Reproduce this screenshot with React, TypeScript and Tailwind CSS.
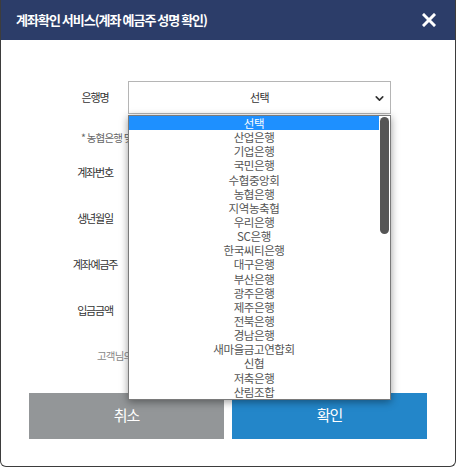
import { ChevronDown } from 'lucide-react';

const banks = [
    '선택',
    '산업은행',
    '기업은행',
    '국민은행',
    '수협중앙회',
    '농협은행',
    '지역농축협',
    '우리은행',
    'SC은행',
    '한국씨티은행',
    '대구은행',
    '부산은행',
    '광주은행',
    '제주은행',
    '전북은행',
    '경남은행',
    '새마을금고연합회',
    '신협',
    '저축은행',
    '산림조합',
];

const fields = ['계좌번호', '생년월일', '계좌예금주', '입금금액'];

const labelClass = 'w-[100px] pl-[34px] text-center text-[11px] tracking-[-1.2px] text-[#333]';
const itemClass = 'h-[14.15px] leading-[14.15px] text-center text-[11.5px] tracking-[-0.4px]';

export default function App() {
    return (
        <div className="w-[456px] h-[467px] bg-white font-['Noto_Sans_CJK_KR','Noto_Sans',sans-serif]">
            <div className="flex flex-col h-full border-x border-b border-[#3d3d3d] rounded-b-[6px] overflow-hidden">
                <div className="h-[40px] shrink-0 bg-[#2c3d69] flex items-center justify-between pl-[15px] pr-[19px]">
                    <h1 className="text-[13px] font-bold tracking-[-1px] text-white">
                        계좌확인 서비스(계좌 예금주 성명 확인)
                    </h1>
                    <svg width="14" height="14" viewBox="0 0 14 14" className="text-white">
                        <path d="M2 2 L12 12 M12 2 L2 12" stroke="currentColor" strokeWidth="3" strokeLinecap="square" />
                    </svg>
                </div>

                <div className="flex-1 px-[27px] pt-[41px]">
                    <div className="flex items-center pr-[37px]">
                        <span className={labelClass}>은행명</span>
                        <div className="relative flex-1">
                            <div className="h-[33px] border border-[#b5b5b5] bg-white flex items-center justify-center relative">
                                <span className="text-[11px] tracking-[-0.5px] text-[#333]">선택</span>
                                <ChevronDown className="absolute right-[4px] top-[10px] w-[13px] h-[13px] text-[#333]" strokeWidth={3} />
                            </div>

                            {/* open native-style option list */}
                            <div className="absolute left-0 right-0 top-[34px] z-10 border border-[#7a7a7a] bg-white shadow-[0_2px_8px_rgba(0,0,0,0.4)] flex">
                                <ul className="flex-1">
                                    {banks.map((b, i) => (
                                        <li
                                            key={b}
                                            className={i === 0 ? `${itemClass} bg-[#1e90ff] text-white` : `${itemClass} text-[#555]`}
                                        >
                                            {b}
                                        </li>
                                    ))}
                                </ul>
                                <div className="w-[11px] pt-[1px] pl-[1px]">
                                    <div className="w-[9px] h-[117px] rounded-full bg-[#555]" />
                                </div>
                            </div>
                        </div>
                    </div>

                    <p className="mt-[16px] pl-[53px] text-[10.5px] tracking-[-0.8px] text-[#666]">
                        * 농협은행 및 지역농축협은 구분하여 선택해 주세요.
                    </p>

                    <div className="mt-[9px] flex flex-col gap-[11px] pr-[37px]">
                        {fields.map((f) => (
                            <div key={f} className="flex items-center">
                                <span className={labelClass}>{f}</span>
                                <div className="flex-1 h-[35px] border border-[#c8c8c8]" />
                            </div>
                        ))}
                    </div>

                    <p className="mt-[20px] pl-[69px] text-[10.5px] tracking-[-0.8px] text-[#888]">
                        고객님의 정보는 계좌 확인 목적으로만 사용됩니다.
                    </p>

                    <div className="mt-[29px] flex gap-[8px] px-px">
                        <button className="flex-1 h-[46px] bg-[#939698] text-white text-[15px] tracking-[-1px]">취소</button>
                        <button className="flex-1 h-[46px] bg-[#2386c9] text-white text-[15px] tracking-[-1px]">확인</button>
                    </div>
                </div>
            </div>
        </div>
    );
}
